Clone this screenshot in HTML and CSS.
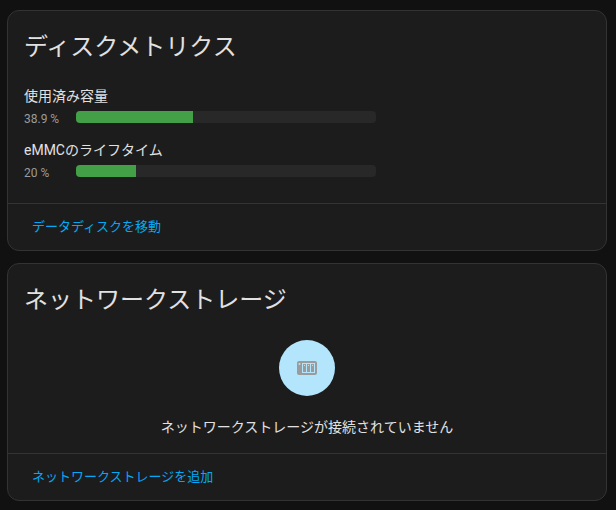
FILE: index.html
```html
<!DOCTYPE html>
<html lang="ja">

<head>
    <meta charset="UTF-8">
    <meta name="viewport" content="width=device-width, initial-scale=1.0">
    <title>ストレージ</title>
    <link rel="stylesheet" href="styles.css">
</head>

<body>
    <main>
        <section class="card">
            <h1>ディスクメトリクス</h1>
            <div class="metrics">
                <div class="metric">
                    <div class="metric-name" id="used-label">使用済み容量</div>
                    <div class="metric-row">
                        <span class="metric-value">38.9 %</span>
                        <div class="bar" role="meter" aria-labelledby="used-label" aria-valuenow="38.9">
                            <div class="bar-fill" style="width: 38.9%"></div>
                        </div>
                    </div>
                </div>
                <div class="metric">
                    <div class="metric-name" id="lifetime-label">eMMCのライフタイム</div>
                    <div class="metric-row">
                        <span class="metric-value">20 %</span>
                        <div class="bar" role="meter" aria-labelledby="lifetime-label" aria-valuenow="20">
                            <div class="bar-fill" style="width: 20%"></div>
                        </div>
                    </div>
                </div>
            </div>
            <div class="card-actions">
                <button type="button">データディスクを移動</button>
            </div>
        </section>

        <section class="card">
            <h1>ネットワークストレージ</h1>
            <div class="empty">
                <div class="empty-icon">
                    <svg viewBox="0 0 24 24" width="24" height="24" aria-hidden="true">
                        <path d="M4,5C2.89,5 2,5.89 2,7V17C2,18.11 2.89,19 4,19H20C21.11,19 22,18.11 22,17V7C22,5.89 21.11,5 20,5H4M4.5,7A1,1 0 0,1 5.5,8A1,1 0 0,1 4.5,9A1,1 0 0,1 3.5,8A1,1 0 0,1 4.5,7M7,7H20V17H7V7M8,8V16H11V8H8M12,8V16H15V8H12M16,8V16H19V8H16M9,9H10V10H9V9M13,9H14V10H13V9M17,9H18V10H17V9Z" />
                    </svg>
                </div>
                <p>ネットワークストレージが接続されていません</p>
            </div>
            <div class="card-actions">
                <button type="button">ネットワークストレージを追加</button>
            </div>
        </section>
    </main>
</body>

</html>
```
FILE: styles.css
```css
* {
    box-sizing: border-box;
}

body {
    margin: 0;
    background-color: #111111;
    color: #e1e1e1;
    font-family: Roboto, "Noto Sans CJK JP", sans-serif;
    font-size: 14px;
    line-height: 20px;
}

main {
    display: flex;
    flex-direction: column;
    gap: 12px;
    padding: 10px 9px 9px 7px;
}

.card {
    background-color: #1c1c1c;
    border: 1px solid #333333;
    border-radius: 12px;
}

h1 {
    margin: 0;
    padding: 12px 16px;
    font-size: 24px;
    font-weight: 400;
    line-height: 48px;
}

.metrics {
    display: flex;
    flex-direction: column;
    gap: 12px;
    padding: 3px 16px 21px;
}

.metric-row {
    display: flex;
    align-items: center;
    height: 22px;
}

.metric-value {
    width: 52px;
    padding-top: 3px;
    color: #9b9b9b;
    font-size: 12px;
}

.bar {
    width: 300px;
    height: 12px;
    border-radius: 4px;
    background-color: #282828;
    overflow: hidden;
}

.bar-fill {
    height: 100%;
    background-color: #43a047;
}

.card-actions {
    border-top: 1px solid #333333;
    padding: 5px 16px;
}

button {
    height: 36px;
    padding: 0 8px 4px;
    border: none;
    background: none;
    color: #03a9f4;
    font-family: inherit;
    font-size: 13px;
    cursor: pointer;
}

.empty {
    display: flex;
    flex-direction: column;
    align-items: center;
    gap: 21px;
    padding: 4px 16px 16px;
}

.empty-icon {
    display: flex;
    align-items: center;
    justify-content: center;
    width: 56px;
    height: 56px;
    border-radius: 50%;
    background-color: #b3e5fc;
}

.empty-icon svg {
    fill: #9b9b9b;
}

.empty p {
    margin: 0;
}
```
